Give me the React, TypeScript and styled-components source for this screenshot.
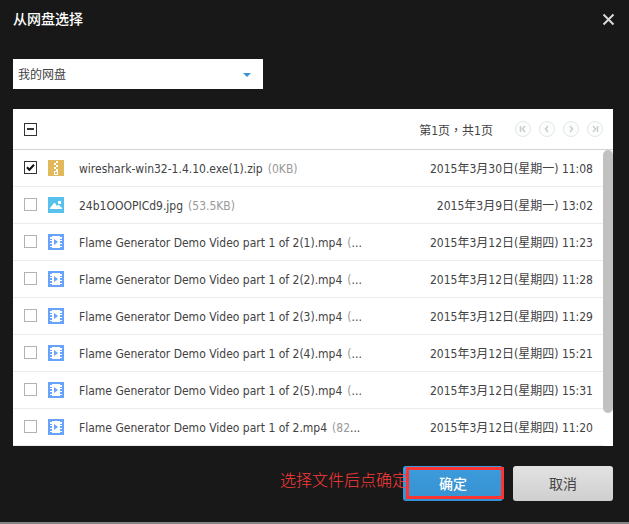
import React, { useEffect, useRef, useState } from "react";
import styled, { createGlobalStyle } from "styled-components";

const GlobalStyle = createGlobalStyle`
  * { box-sizing: border-box; }
  html { height: 100%; }
  body {
    margin: 0;
    height: 100%;
    background: #181818;
    font-family: "DejaVu Sans Condensed", "Noto Sans CJK SC", sans-serif;
    font-size: 12px;
    color: #424242;
  }
  #root { height: 100%; }
  button, select { font-family: inherit; }
`;

const Dialog = styled.main`
  display: flex;
  flex-direction: column;
  min-height: 100%;
  padding: 0 16px 0 13px;
  background: #181818;
  border-bottom: 2px solid #858585;
`;

const TitleBar = styled.header`
  display: flex;
  align-items: center;
  justify-content: space-between;
  height: 38px;
  margin-bottom: 21px;
`;

const Title = styled.h1`
  margin: 0;
  font-size: 14px;
  line-height: 20px;
  font-weight: 500;
  color: #fff;
`;

const CloseButton = styled.button`
  display: flex;
  padding: 0;
  border: 0;
  margin-right: -2px;
  background: none;
  color: #d8d8d8;
  cursor: pointer;
`;

const SourcePicker = styled.label`
  position: relative;
  display: block;
  width: 250px;
  margin-bottom: 20px;
`;

const SourceSelect = styled.select`
  display: block;
  width: 100%;
  height: 30px;
  padding: 1px 24px 0 5px;
  border: 0;
  border-radius: 0;
  appearance: none;
  background: #fff;
  color: #424242;
  font-size: 12px;
`;

const SelectArrow = styled.svg`
  position: absolute;
  top: 14px;
  right: 12px;
  pointer-events: none;
`;

const Panel = styled.section`
  background: #fff;
`;

const PanelHeader = styled.div`
  display: flex;
  align-items: center;
  height: 41px;
  padding: 0 10px 0 11px;
  border-bottom: 1px solid #d4d4d4;
`;

const PageInfo = styled.span`
  margin-left: auto;
  margin-right: 22px;
  font-family: "DejaVu Sans Condensed", "Noto Sans CJK TC", sans-serif;
`;

const Pager = styled.nav`
  display: flex;
  gap: 8px;
`;

const PagerButton = styled.button`
  display: flex;
  align-items: center;
  justify-content: center;
  width: 16px;
  height: 16px;
  padding: 0;
  border: 1px solid #e3e6e6;
  border-radius: 50%;
  background: #fcfdfd;
  color: #c9cccc;
`;

const CheckBox = styled.input`
  display: block;
  width: 13px;
  height: 13px;
  margin: 0;
  appearance: none;
  border: 1px solid #b2b2b2;
  background: #fff center / 11px 11px no-repeat;

  &:checked {
    border-color: #333;
    background-image: url("data:image/svg+xml,%3Csvg xmlns='http://www.w3.org/2000/svg' viewBox='0 0 11 11'%3E%3Cpath d='M2 5.2 4.4 7.8 9 2.8' fill='none' stroke='%23111' stroke-width='2'/%3E%3C/svg%3E");
  }

  &:indeterminate {
    border-color: #333;
    background-image: url("data:image/svg+xml,%3Csvg xmlns='http://www.w3.org/2000/svg' viewBox='0 0 11 11'%3E%3Cpath d='M2 4h7v2H2z' fill='%23333'/%3E%3C/svg%3E");
  }
`;

const ListArea = styled.div`
  display: flex;
`;

const ScrollTrack = styled.div`
  flex: none;
  width: 10px;
`;

const ScrollThumb = styled.div`
  height: 263px;
  border-radius: 5px;
  background: #c1c1c1;
`;

const FileTable = styled.table`
  flex: 1;
  min-width: 0;
  width: 100%;
  table-layout: fixed;
  border-collapse: separate;
  border-spacing: 0;
`;

const FileRow = styled.tr`
  height: 37px;
`;

const Cell = styled.td<{ $width?: number; $align?: string }>`
  width: ${(p) => (p.$width ? `${p.$width}px` : "auto")};
  padding: 0;
  border-bottom: 1px solid #ebebeb;
  text-align: ${(p) => p.$align || "left"};
  line-height: 18px;
  white-space: nowrap;
  vertical-align: middle;
`;

const CheckCell = styled(Cell)`
  padding: 0 0 2px 11px;
`;

const NameCell = styled(Cell)`
  padding-top: 2px;
  overflow: hidden;
  text-overflow: ellipsis;
`;

const DateCell = styled(Cell)`
  padding-top: 2px;
  padding-right: 10px;
`;

const Size = styled.span`
  margin-left: 5px;
  color: #999;
`;

const TypeIcon = styled.svg`
  display: block;
`;

const Footer = styled.footer`
  display: flex;
  justify-content: flex-end;
  gap: 10px;
  padding: 20px 0;
`;

const ConfirmArea = styled.div`
  position: relative;
`;

const ActionButton = styled.button<{ $primary?: boolean }>`
  display: block;
  width: 100px;
  height: 35px;
  padding: 0 0 2px;
  border: 0;
  border-radius: 3px;
  font-size: 14px;
  font-weight: ${(p) => (p.$primary ? 500 : 400)};
  color: ${(p) => (p.$primary ? "#fff" : "#444")};
  background: ${(p) =>
    p.$primary
      ? "linear-gradient(#3c9cdd, #3791d0)"
      : "linear-gradient(#e2e2e2, #cfcfcf)"};
  cursor: pointer;
`;

const Highlight = styled.span`
  position: absolute;
  inset: 1px -1px 2px 3px;
  border: 3px solid #fb3434;
  pointer-events: none;
`;

const Note = styled.span`
  position: absolute;
  top: 3px;
  right: calc(100% - 5px);
  font-size: 16px;
  font-weight: 300;
  line-height: 24px;
  white-space: nowrap;
  color: #ff3b3b;
  pointer-events: none;
`;

type Kind = "zip" | "image" | "video";

function FileIcon({ kind }: { kind: Kind }) {
  if (kind === "zip") {
    return (
      <TypeIcon width="16" height="16" viewBox="0 0 16 16" shapeRendering="crispEdges" aria-label="zip">
        <path d="M0 0h16v16H0z" fill="#e2b95a" />
        <path d="M8 1h2v2H8zM6 3h2v2H6zM8 5h2v2H8zM6 7h2v2H6zM8 9h2v2H8zM6 11h4v4H6z" fill="#fff" />
        <path d="M7 12h2v2H7z" fill="#e2b95a" />
      </TypeIcon>
    );
  }
  if (kind === "image") {
    return (
      <TypeIcon width="16" height="16" viewBox="0 0 16 16" aria-label="image">
        <path d="M0 0h16v16H0z" fill="#57c0ed" />
        <path d="M2 12V11l4-5h1l2 3 1-1h1l3 3v1z" fill="#fff" />
        <path d="M10 4h3v3h-3z" fill="#fff" />
      </TypeIcon>
    );
  }
  return (
    <TypeIcon width="16" height="16" viewBox="0 0 16 16" aria-label="video">
      <path d="M0 0h16v16H0z" fill="#67a3fb" />
      <path
        d="M4 2h8v12H4zM2 3h2v2H2zM2 6h2v1H2zM2 9h2v1H2zM2 12h2v1H2zM12 3h2v2h-2zM12 6h2v1h-2zM12 9h2v1h-2zM12 12h2v1h-2z"
        fill="#fff"
        shapeRendering="crispEdges"
      />
      <path d="M6 5v6l4-3z" fill="#67a3fb" />
    </TypeIcon>
  );
}

interface FileItem {
  name: string;
  size: string;
  date: string;
  kind: Kind;
}

const FILES: FileItem[] = [
  { name: "wireshark-win32-1.4.10.exe(1).zip", size: "(0KB)", date: "2015年3月30日(星期一) 11:08", kind: "zip" },
  { name: "24b1OOOPICd9.jpg", size: "(53.5KB)", date: "2015年3月9日(星期一) 13:02", kind: "image" },
  { name: "Flame Generator Demo Video part 1 of 2(1).mp4", size: "(", date: "2015年3月12日(星期四) 11:23", kind: "video" },
  { name: "Flame Generator Demo Video part 1 of 2(2).mp4", size: "(", date: "2015年3月12日(星期四) 11:28", kind: "video" },
  { name: "Flame Generator Demo Video part 1 of 2(3).mp4", size: "(", date: "2015年3月12日(星期四) 11:29", kind: "video" },
  { name: "Flame Generator Demo Video part 1 of 2(4).mp4", size: "(", date: "2015年3月12日(星期四) 15:21", kind: "video" },
  { name: "Flame Generator Demo Video part 1 of 2(5).mp4", size: "(", date: "2015年3月12日(星期四) 15:31", kind: "video" },
  { name: "Flame Generator Demo Video part 1 of 2.mp4", size: "(82", date: "2015年3月12日(星期四) 11:20", kind: "video" },
];

const PAGER = [
  { label: "首页", path: "M1.5 1v6M6 1 3.5 4 6 7" },
  { label: "上一页", path: "M5 1 2.5 4 5 7" },
  { label: "下一页", path: "M3 1 5.5 4 3 7" },
  { label: "末页", path: "M2 1 4.5 4 2 7M6.5 1v6" },
];

export default function App() {
  const [selected, setSelected] = useState<number[]>([0]);
  const allRef = useRef<HTMLInputElement>(null);
  const all = selected.length === FILES.length;

  useEffect(() => {
    if (allRef.current) allRef.current.indeterminate = selected.length > 0 && !all;
  }, [selected, all]);

  const toggle = (i: number) =>
    setSelected((s) => (s.includes(i) ? s.filter((n) => n !== i) : [...s, i]));

  return (
    <>
      <GlobalStyle />
      <Dialog>
        <TitleBar>
          <Title>从网盘选择</Title>
          <CloseButton aria-label="关闭">
            <svg width="13" height="13" viewBox="0 0 13 13">
              <path d="M1.5 1.5l10 10M11.5 1.5l-10 10" stroke="currentColor" strokeWidth="2" />
            </svg>
          </CloseButton>
        </TitleBar>
        <SourcePicker>
          <SourceSelect aria-label="网盘">
            <option>我的网盘</option>
          </SourceSelect>
          <SelectArrow width="8" height="4" viewBox="0 0 8 4">
            <path d="M0 0h8L4 4z" fill="#3693d6" />
          </SelectArrow>
        </SourcePicker>
        <Panel>
          <PanelHeader>
            <CheckBox
              ref={allRef}
              type="checkbox"
              aria-label="全选"
              checked={all}
              onChange={() => setSelected(all ? [] : FILES.map((_, i) => i))}
            />
            <PageInfo>第1页，共1页</PageInfo>
            <Pager>
              {PAGER.map((p) => (
                <PagerButton key={p.label} aria-label={p.label}>
                  <svg width="8" height="8" viewBox="0 0 8 8">
                    <path d={p.path} fill="none" stroke="currentColor" strokeWidth="1.5" />
                  </svg>
                </PagerButton>
              ))}
            </Pager>
          </PanelHeader>
          <ListArea>
            <FileTable>
              <tbody>
                {FILES.map((f, i) => (
                  <FileRow key={f.name}>
                    <CheckCell $width={35}>
                      <CheckBox
                        type="checkbox"
                        aria-label={f.name}
                        checked={selected.includes(i)}
                        onChange={() => toggle(i)}
                      />
                    </CheckCell>
                    <Cell $width={31}>
                      <FileIcon kind={f.kind} />
                    </Cell>
                    <NameCell>
                      {f.name}
                      <Size>{f.size}</Size>
                      {f.kind === "video" && "..."}
                    </NameCell>
                    <DateCell $width={190} $align="right">
                      {f.date}
                    </DateCell>
                  </FileRow>
                ))}
              </tbody>
            </FileTable>
            <ScrollTrack>
              <ScrollThumb />
            </ScrollTrack>
          </ListArea>
        </Panel>
        <Footer>
          <ConfirmArea>
            <ActionButton $primary>确定</ActionButton>
            <Highlight />
            <Note>选择文件后点确定</Note>
          </ConfirmArea>
          <ActionButton>取消</ActionButton>
        </Footer>
      </Dialog>
    </>
  );
}
